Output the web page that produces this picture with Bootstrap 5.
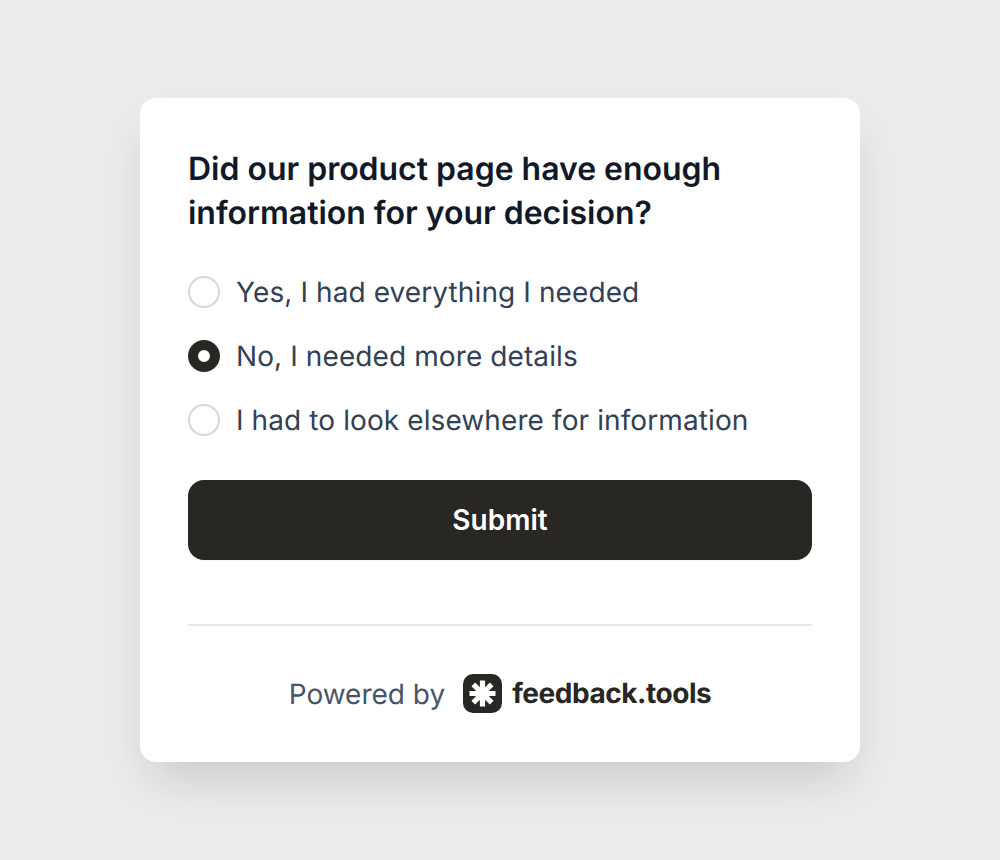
<!DOCTYPE html>
<html lang="en"><head><meta charset="utf-8">
<link href="https://cdn.jsdelivr.net/npm/bootstrap@5.3.0/dist/css/bootstrap.min.css" rel="stylesheet">
<style>
html,body{height:100%}
body{background:#ececec;font-family:Inter,"Liberation Sans",sans-serif;text-rendering:geometricPrecision}
.stage{height:860px;padding-top:98px}
.panel{width:720px;height:664px;background:#fff;border-radius:16px;padding:49px 48px 0;box-shadow:0 25px 50px -12px rgba(17,24,39,.18)}
.panel>*{flex:none}
.ask{font-size:32px;line-height:44px;font-weight:600;color:#111827;margin:0 0 25px;letter-spacing:-.02px}
.opt{height:64px;gap:16px;font-size:28px;letter-spacing:.1px;color:#334155;margin:0}
.ring{width:32px;height:32px;border-radius:50%;border:2px solid #d1d5de;background:#fff;flex:none}
.ring.on{border:10px solid #282724}
.go{height:80px;border-radius:16px;background:#282724;color:#fff;border:0;font-size:28px;font-weight:600;margin-top:28px;box-shadow:0 1px 2px rgba(0,0,0,.05)}
.go:hover{background:#282724;color:#fff}
.rule{border-top:2px solid #e5e7eb;margin:64px 0 0;opacity:1}
.foot{height:80px;gap:18px;margin-top:28px}
.pw{font-size:28px;color:#475569}
.brand{font-size:28px;font-weight:700;color:#282724;gap:10px;letter-spacing:-.45px}
.brand-name{margin-bottom:2px}
.glyph{width:39px;height:39px;flex:none;margin-bottom:1px}
</style></head><body>
<div class="stage d-flex justify-content-center align-items-start">
<div class="panel d-flex flex-column">
<h1 class="ask">Did our product page have enough information for your decision?</h1>
<label class="opt d-flex align-items-center"><span class="ring"></span>Yes, I had everything I needed</label>
<label class="opt d-flex align-items-center"><span class="ring on"></span>No, I needed more details</label>
<label class="opt d-flex align-items-center"><span class="ring"></span>I had to look elsewhere for information</label>
<button class="btn go w-100">Submit</button>
<hr class="rule">
<div class="foot d-flex justify-content-center align-items-center"><span class="pw">Powered by</span>
<span class="brand d-flex align-items-center"><svg class="glyph" viewBox="0 0 39 39"><rect width="39" height="39" rx="10" fill="#282724"/><g stroke="#fff" stroke-width="5.2"><path d="M19.500 6.500v26M6.500 19.500h26M10.300 10.300l18.400 18.400M28.700 10.300L10.300 28.700"/></g></svg><span class="brand-name">feedback.tools</span></span></div>
</div></div>
</body></html>
